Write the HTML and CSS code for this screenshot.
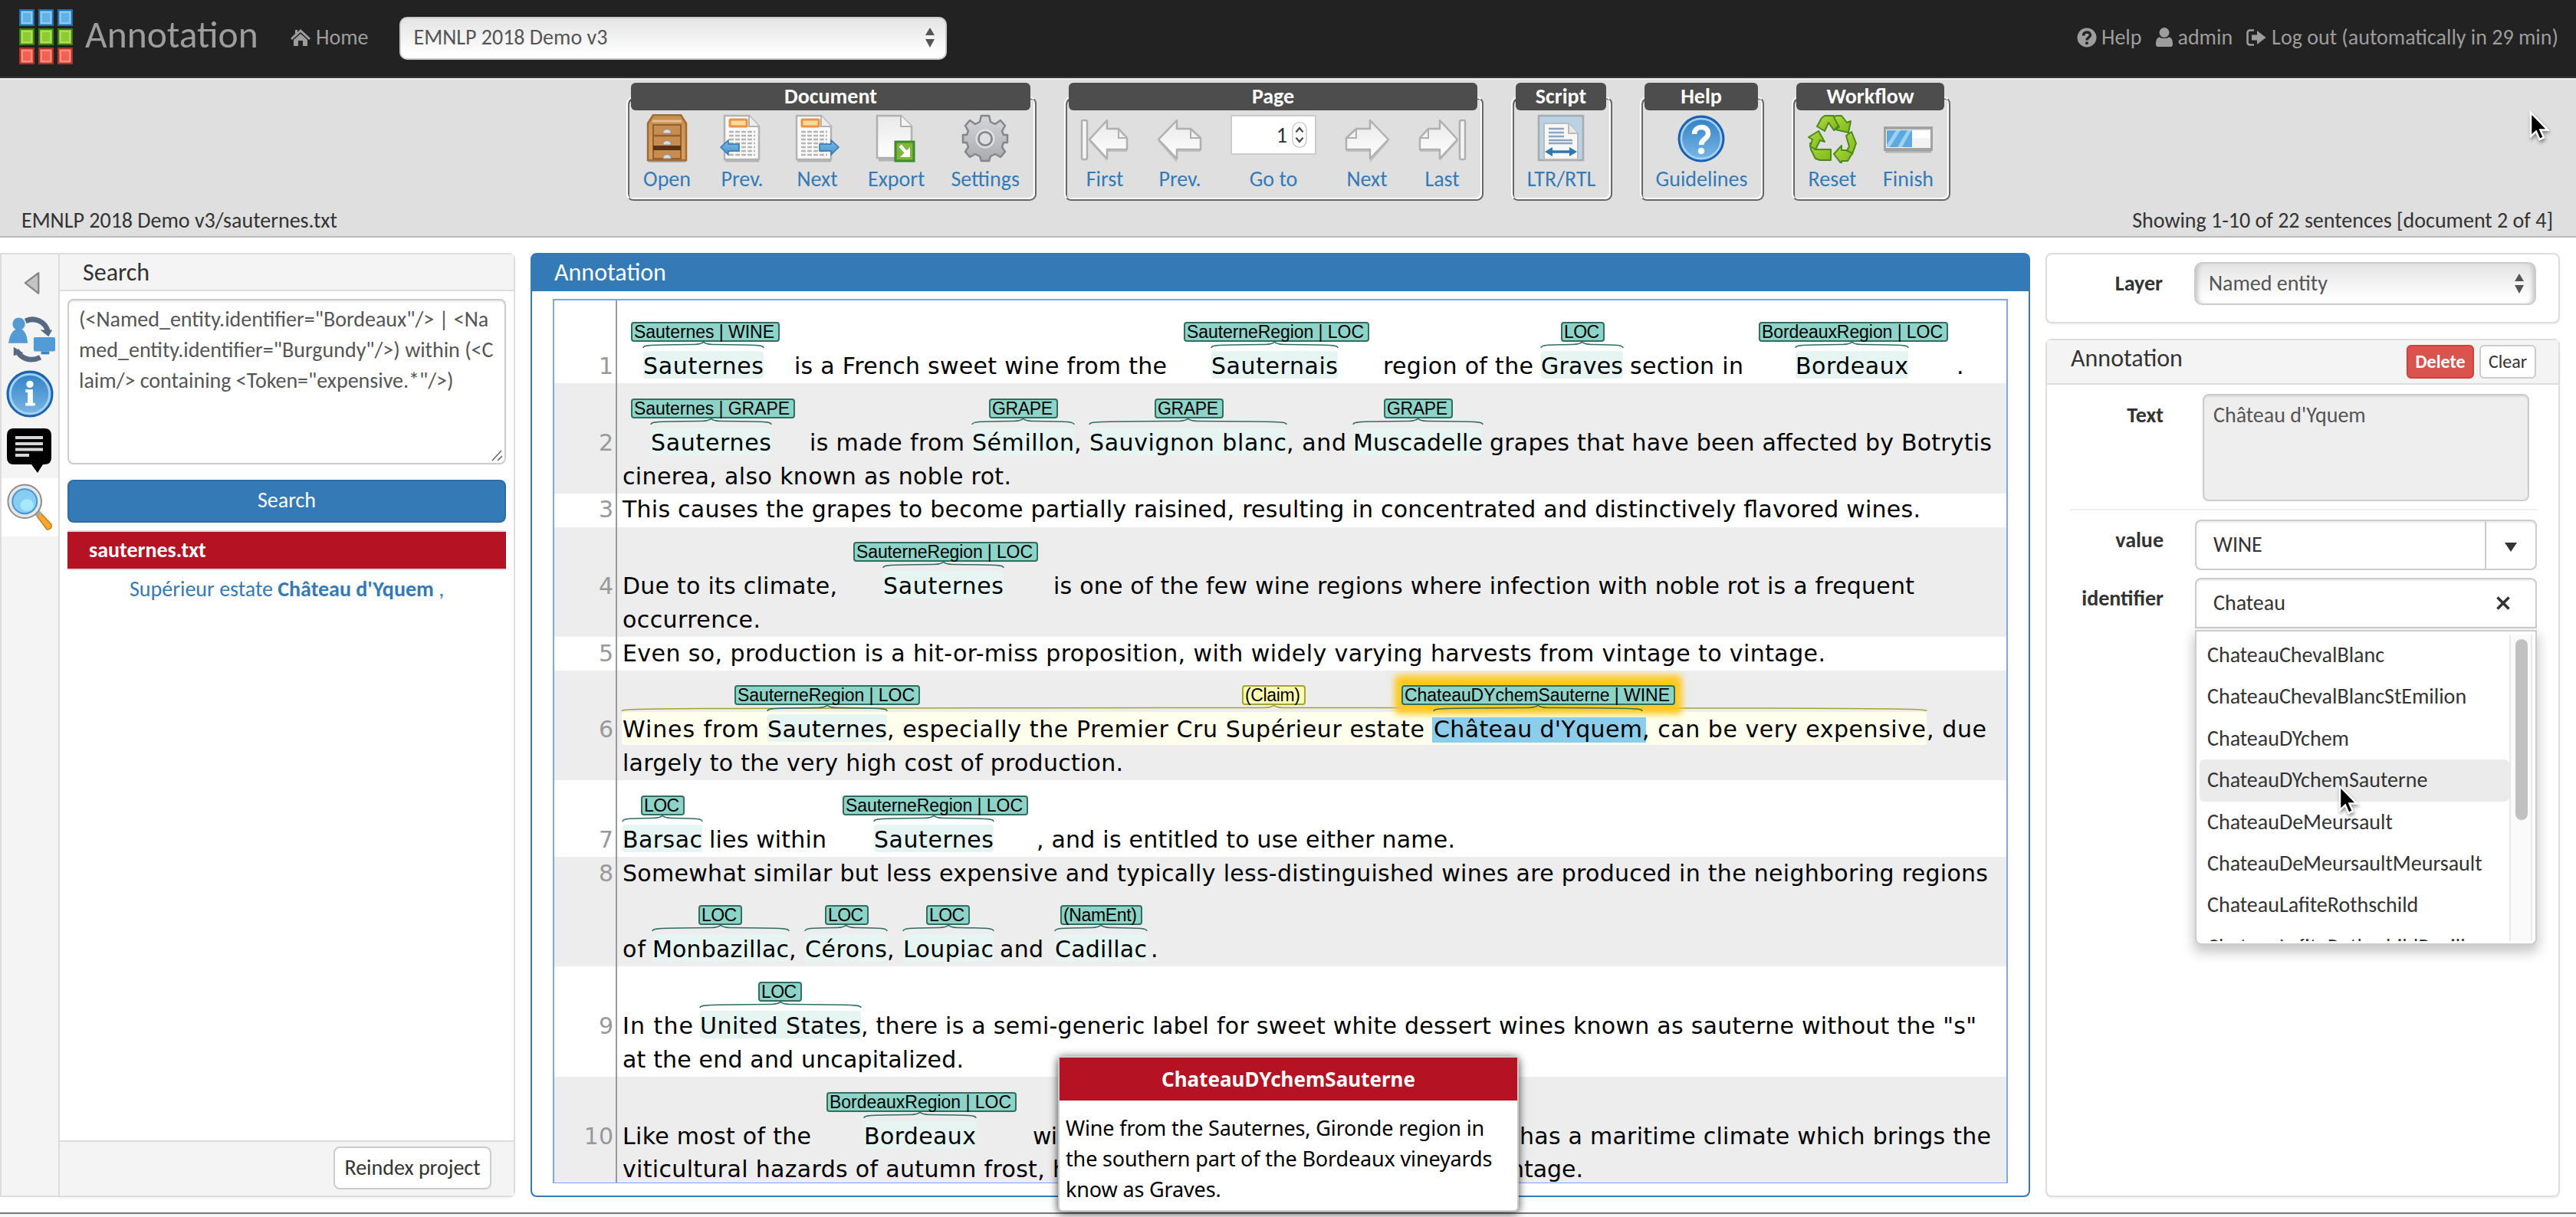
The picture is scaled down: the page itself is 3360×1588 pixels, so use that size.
FILE: index.html
```html
<!DOCTYPE html>
<html lang="en">
<head>
<meta charset="utf-8">
<title>Annotation</title>
<link rel="stylesheet" href="styles.css">
</head>
<body>
<svg class="defs" width="0" height="0" aria-hidden="true">
  <defs>
    <linearGradient id="gBlue" x1="0" y1="0" x2="0" y2="1"><stop offset="0" stop-color="#2f7fc4"/><stop offset="1" stop-color="#7db9e8"/></linearGradient>
    <linearGradient id="gArrow" x1="0" y1="0" x2="0" y2="1"><stop offset="0" stop-color="#7db8e2"/><stop offset="1" stop-color="#4a97cf"/></linearGradient>
    <linearGradient id="gPaper" x1="0" y1="0" x2="0" y2="1"><stop offset="0" stop-color="#e9e9e9"/><stop offset="1" stop-color="#ffffff"/></linearGradient>
    <linearGradient id="gWood" x1="0" y1="0" x2="0" y2="1"><stop offset="0" stop-color="#c58f55"/><stop offset="1" stop-color="#d99e60"/></linearGradient>
    <linearGradient id="gGear" x1="0" y1="0" x2="0" y2="1"><stop offset="0" stop-color="#d6d7da"/><stop offset="1" stop-color="#a9aaad"/></linearGradient>
    <linearGradient id="gGreen" x1="0" y1="0" x2="1" y2="1"><stop offset="0" stop-color="#b0d943"/><stop offset="1" stop-color="#7fb814"/></linearGradient>
    <symbol id="cursor" viewBox="0 0 26 40">
      <path d="M2 2V33L9 26.500L13.500 37L19 34.500L14.500 24.500H24Z" fill="#000" stroke="#fff" stroke-width="2.500"/>
    </symbol>
    <symbol id="page" viewBox="0 0 64 64">
      <path d="M10 60H54" stroke="#999" stroke-width="5" opacity=".6"/>
      <path d="M9 2H41L54 16V59H9Z" fill="#fafafa" stroke="#b3b3b3" stroke-width="2.500"/>
      <path d="M41 2V16H54" fill="#eee" stroke="#b3b3b3" stroke-width="2"/>
      <rect x="16" y="7" width="22" height="9" rx="1" fill="#f9dba0" stroke="#ee9440" stroke-width="3"/>
      <path d="M15 23H49M15 28H49M15 33H49M15 38H49M15 43H49M15 48H49M15 53H49" stroke="#b5b5b5" stroke-width="2.500" stroke-dasharray="6 2"/>
    </symbol>
    <symbol id="arrow" viewBox="0 0 64 64">
      <path d="M4 33L28 6V18H46L59 30V46H28V60Z" fill="#888" opacity=".35" transform="translate(0 3)"/>
      <path d="M4 33L28 8V19H46L59 31V46H28V58Z" fill="url(#gPaper)" stroke="#b0b0b0" stroke-width="2.500" stroke-linejoin="round"/>
      <path d="M46 19V31H59" fill="none" stroke="#b0b0b0" stroke-width="2"/>
    </symbol>
    <symbol id="arrowEnd" viewBox="0 0 64 64">
      <path d="M12 33L35 8V19H50L61 31V46H35V58Z" fill="#888" opacity=".35" transform="translate(0 3)"/>
      <rect x="2" y="8" width="7" height="51" rx="2" fill="#f6f6f6" stroke="#b0b0b0" stroke-width="2.500"/>
      <path d="M12 33L35 8V19H50L61 31V46H35V58Z" fill="url(#gPaper)" stroke="#b0b0b0" stroke-width="2.500" stroke-linejoin="round"/>
      <path d="M50 19V31H61" fill="none" stroke="#b0b0b0" stroke-width="2"/>
    </symbol>
    <symbol id="updown" viewBox="0 0 14 26"><path d="M7 0L13 10H1ZM7 26L1 15H13Z" fill="#555"/></symbol>
  </defs>
</svg>

<header class="navbar">
  <svg class="logo" viewBox="0 0 72 74">
    <g stroke="#1c6fa8" stroke-width="2" fill="#5fb1e8"><rect x="1" y="1" width="18" height="20"/><rect x="26" y="1" width="18" height="20"/><rect x="51" y="1" width="18" height="20"/></g>
    <g stroke="#3d7d12" stroke-width="2" fill="#8ccc2c"><rect x="1" y="26" width="18" height="20"/><rect x="26" y="26" width="18" height="20"/><rect x="51" y="26" width="18" height="20"/></g>
    <g stroke="#a8332a" stroke-width="2" fill="#f4604f"><rect x="1" y="51" width="18" height="20"/><rect x="26" y="51" width="18" height="20"/><rect x="51" y="51" width="18" height="20"/></g>
    <g fill="none" stroke="#fff" stroke-opacity=".3" stroke-width="2"><path d="M4 4h12v14H4zM29 4h12v14H29zM54 4h12v14H54zM4 29h12v14H4zM29 29h12v14H29zM54 29h12v14H54zM4 54h12v14H4zM29 54h12v14H29zM54 54h12v14H54z"/></g>
  </svg>
  <span class="brand">Annotation</span>
  <a class="navlink home"><svg viewBox="0 0 26 22"><path d="M13 0L26 12L24 14L13 4L2 14L0 12L6 6V1H9V4ZM13 6L22 14V22H16V15H10V22H4V14Z" fill="#9d9d9d"/></svg>Home</a>
  <div class="project-select"><span>EMNLP 2018 Demo v3</span><svg><use href="#updown"/></svg></div>
  <nav class="navright">
    <a class="navlink"><svg viewBox="0 0 26 26"><circle cx="13" cy="13" r="12.500" fill="#9d9d9d"/><path d="M8.500 10.500C8.500 4.500 17.500 4.500 17.500 10C17.500 13 13 13 13 16.500M13 18.500V22" fill="none" stroke="#222" stroke-width="3.400"/></svg>Help</a>
    <a class="navlink admin"><svg viewBox="1 0 24 26"><ellipse cx="13" cy="6.500" rx="6.500" ry="6.500" fill="#9d9d9d"/><path d="M7 12.500C9 14.500 17 14.500 19 12.500C23 13 24 17 24 22Q24 25 21 25H5Q2 25 2 22C2 17 3 13 7 12.500Z" fill="#9d9d9d"/></svg>admin</a>
    <a class="navlink logout"><svg viewBox="0 0 26 22"><path d="M10 1.500H5Q1.500 1.500 1.500 5V17Q1.500 20.500 5 20.500H10" fill="none" stroke="#9d9d9d" stroke-width="2.600"/><path d="M7 7.500H14V2L25.500 11L14 20V14.500H7Z" fill="#9d9d9d"/></svg>Log out (automatically in 29 min)</a>
  </nav>
</header>

<section class="actionbar">
  <div class="groups">
    <div class="group g-document">
      <h2>Document</h2>
      <div class="buttons">
        <a class="tool"><svg viewBox="0 0 64 64"><rect x="7" y="58" width="50" height="5" rx="2" fill="#777" opacity=".5"/><path d="M7 12L14 1H50L57 12V60H7Z" fill="url(#gWood)" stroke="#a26b34" stroke-width="2.500"/><path d="M13 9H51" stroke="#e6bd8c" stroke-width="3"/><path d="M14 14H50V58H14Z" fill="#c78d50" stroke="#94602c" stroke-width="2"/><path d="M14 28H50" stroke="#94602c" stroke-width="2.500"/><path d="M14 44H50" stroke="#5a3210" stroke-width="6"/><path d="M27 22Q32 17 37 22V25H27ZM27 37Q32 32 37 37V40H27ZM27 55Q32 50 37 55V58H27Z" fill="#d9dde2" stroke="#8d8d8d"/></svg>Open</a>
        <a class="tool"><svg viewBox="0 0 64 64"><use href="#page" width="64" height="64"/><path d="M4 43L14 34V39H28V48H14V53Z" fill="url(#gArrow)" stroke="#2f77b5" stroke-width="1.500"/></svg>Prev.</a>
        <a class="tool"><svg viewBox="0 0 64 64"><use href="#page" width="64" height="64" x="-4"/><path d="M60 43L50 34V39H35V48H50V53Z" fill="url(#gArrow)" stroke="#2f77b5" stroke-width="1.500"/></svg>Next</a>
        <a class="tool"><svg viewBox="0 0 64 64"><path d="M9 59H50" stroke="#999" stroke-width="5" opacity=".6"/><path d="M7 2H38L52 16V57H7Z" fill="url(#gPaper)" stroke="#b0b0b0" stroke-width="2.500"/><path d="M38 2V16H52" fill="#f4f4f4" stroke="#b0b0b0" stroke-width="2"/><rect x="31" y="36" width="24" height="25" fill="#7db63a" stroke="#3f8a2b" stroke-width="3"/><path d="M37 41L46 51" fill="none" stroke="#fff" stroke-width="4.500"/><path d="M50 43V56H37Z" fill="#fff"/></svg>Export</a>
        <a class="tool"><svg viewBox="0 0 64 64"><path d="M27 2H37L39 10L45 13L52 8L58 15L54 22L56 27H61V37H56L54 43L58 49L52 56L45 52L39 55L37 61H27L25 55L19 52L12 56L6 49L10 43L8 37H3V27H8L10 22L6 15L12 8L19 13L25 10Z" fill="url(#gGear)" stroke="#85868a" stroke-width="2.500" stroke-linejoin="round"/><circle cx="32" cy="32" r="8.500" fill="#dedede" stroke="#85868a" stroke-width="2.500"/><circle cx="32" cy="32" r="11.500" fill="none" stroke="#e4e4e6" stroke-width="2"/></svg>Settings</a>
      </div>
    </div>
    <div class="group g-page">
      <h2>Page</h2>
      <div class="buttons">
        <a class="tool"><svg viewBox="0 0 64 64"><use href="#arrowEnd" width="64" height="64"/></svg>First</a>
        <a class="tool"><svg viewBox="0 0 64 64"><use href="#arrow" width="64" height="64"/></svg>Prev.</a>
        <div class="tool goto"><div class="pageno"><span>1</span><svg viewBox="0 0 22 38"><rect x="1" y="1" width="20" height="36" rx="10" fill="#fff" stroke="#c8c8c8" stroke-width="1.500"/><path d="M6 15L11 9L16 15M6 23L11 29L16 23" fill="none" stroke="#444" stroke-width="2.500"/></svg></div>Go to</div>
        <a class="tool"><svg viewBox="0 0 64 64"><use href="#arrow" width="64" height="64" transform="matrix(-1 0 0 1 64 0)"/></svg>Next</a>
        <a class="tool"><svg viewBox="0 0 64 64"><use href="#arrowEnd" width="64" height="64" transform="matrix(-1 0 0 1 64 0)"/></svg>Last</a>
      </div>
    </div>
    <div class="group g-script">
      <h2>Script</h2>
      <div class="buttons">
        <a class="tool"><svg viewBox="0 0 64 64"><rect x="3" y="2" width="58" height="58" fill="#b9d2e4" stroke="#a7abb0" stroke-width="2.500"/><path d="M10 59V12H42L54 25V59Z" fill="#f7f7f7" stroke="#bbb" stroke-width="2"/><path d="M42 12V25H54" fill="#e7e7e7" stroke="#bbb" stroke-width="2"/><path d="M16 19H36M16 24H36M16 29H36M16 34H47M16 38H47" stroke="#8aa4c4" stroke-width="2.500"/><path d="M15 49H49" stroke="#2f77b5" stroke-width="3.500"/><path d="M11 49L21 43V55ZM53 49L43 43V55Z" fill="#2f77b5"/></svg>LTR/RTL</a>
      </div>
    </div>
    <div class="group g-help">
      <h2>Help</h2>
      <div class="buttons">
        <a class="tool"><svg viewBox="0 0 64 64"><circle cx="32" cy="32" r="29" fill="url(#gBlue)" stroke="#1d62b0" stroke-width="3"/><circle cx="32" cy="32" r="26" fill="none" stroke="#a5d1f2" stroke-width="2.500"/><path d="M23 26C23 14 42 14 41 26C40 33 32 32 32 40" fill="none" stroke="#fff" stroke-width="6.500"/><circle cx="32" cy="48" r="4.300" fill="#fff"/></svg>Guidelines</a>
      </div>
    </div>
    <div class="group g-workflow">
      <h2>Workflow</h2>
      <div class="buttons">
        <a class="tool"><svg viewBox="0 0 64 64"><g fill="url(#gGreen)" stroke="#4c8a1c" stroke-width="2" stroke-linejoin="round"><path d="M22 2H34L40 15L34 21L27 11L22 22L12 16L18 5Z"/><path d="M37 2H44L51 11L56 9L53 24L36 20L41 17L34 4Z"/><path d="M50 28L57 23L63 38L58 52L50 55H47L54 42Z"/><path d="M58 51L52 61H44V65L34 52L44 41V47H50Z"/><path d="M9 46H30V60H16L10 58L4 46L3 38L7 40Z"/><path d="M1 30L14 22L22 36L16 34L10 46L3 42L6 33Z"/></g></svg>Reset</a>
        <a class="tool"><svg viewBox="0 0 64 64"><rect x="1" y="18" width="62" height="28" fill="#f2f2f2" stroke="#a3a3a3" stroke-width="4"/><rect x="4" y="21" width="33" height="22" fill="#5ba9df"/><path d="M4 40L16 21H22L8 43H4ZM18 43L31 21H36L24 43Z" fill="#9dd0f3"/><path d="M37 22H60V31H37Z" fill="#fff"/><path d="M2 49H62" stroke="#888" stroke-opacity=".5" stroke-width="3"/></svg>Finish</a>
      </div>
    </div>
  </div>
  <div class="docinfo"><span>EMNLP 2018 Demo v3/sauternes.txt</span><span>Showing 1-10 of 22 sentences [document 2 of 4]</span></div>
</section>

<main class="workspace">
  <aside class="rail">
    <a class="rail-item collapse"><svg viewBox="0 0 24 34"><path d="M21 2V31L2 16Z" fill="#c4c4c6" stroke="#85858a" stroke-width="2.500" stroke-linejoin="round"/></svg></a>
    <a class="rail-item sync"><svg viewBox="0 0 64 64"><path d="M24 7C38 1 51 9 54 21M44 56C30 63 17 57 12 46" fill="none" stroke="#566882" stroke-width="7"/><path d="M44 19H60L55 28ZM8 42L21 50L8 54Z" fill="#566882"/><circle cx="15" cy="11" r="8.500" fill="#549bd6"/><path d="M1 37Q3 22 11 18H19Q26 22 27 37Z" fill="#549bd6"/><rect x="35" y="29" width="29" height="19" rx="2" fill="#549bd6"/><path d="M45 48H56V52H45Z" fill="#3f83bd"/></svg></a>
    <a class="rail-item info"><svg viewBox="0 0 64 64"><circle cx="32" cy="32" r="30" fill="url(#gBlue)" stroke="#1d62b0" stroke-width="3"/><circle cx="32" cy="32" r="26.500" fill="none" stroke="#a5d1f2" stroke-width="3"/><circle cx="32" cy="19" r="4.800" fill="#fff"/><path d="M26 26H36V44H39V48H26V44H29V30H26Z" fill="#fff"/></svg></a>
    <a class="rail-item comment"><svg viewBox="0 0 58 58"><path d="M9 0H49Q58 0 58 9V38Q58 47 49 47H47L40 58L32 47H9Q0 47 0 38V9Q0 0 9 0Z" fill="#000"/><path d="M11 12H47M11 20H47M11 27.500H47M11 35H29" stroke="#d6d6d6" stroke-width="4"/></svg></a>
    <a class="rail-item search active"><svg viewBox="0 0 62 64"><path d="M39 42L44 38L60 55Q61 62 54 62Z" fill="#f6a72c" stroke="#c07f1b" stroke-width="1.500"/><path d="M37 38L42 34L47 40L41 45Z" fill="#a9a9a9"/><circle cx="24" cy="24" r="19.500" fill="#89cdf4" stroke="#e8e8e8" stroke-width="6"/><circle cx="24" cy="24" r="22.500" fill="none" stroke="#8d8d8d" stroke-width="2"/><circle cx="24" cy="24" r="16.500" fill="none" stroke="#4597cf" stroke-width="2"/><ellipse cx="27" cy="29" rx="9" ry="8" fill="#a6e9fb"/></svg></a>
  </aside>
  <section class="panel searchpanel">
    <h3>Search</h3>
    <div class="searchbody">
      <div class="query">(&lt;Named_entity.identifier="Bordeaux"/&gt; | &lt;Na<br>med_entity.identifier="Burgundy"/&gt;) within (&lt;C<br>laim/&gt; containing &lt;Token="expensive.*"/&gt;)<svg class="grip" viewBox="0 0 16 16"><path d="M1 14L13 1M8 14L14 8" stroke="#666" stroke-width="1.600"/></svg></div>
      <button class="primary">Search</button>
      <div class="hitdoc">sauternes.txt</div>
      <a class="hit">Supérieur estate <b>Château d'Yquem</b> ,</a>
    </div>
    <footer><button class="plain">Reindex project</button></footer>
  </section>

  <section class="annotator">
    <h3>Annotation</h3>
    <div class="canvas" id="canvas"></div>
  </section>

  <aside class="details">
    <section class="panel layer">
      <label>Layer</label>
      <div class="layer-select"><span>Named entity</span><svg><use href="#updown"/></svg></div>
    </section>
    <section class="panel editor">
      <h3><span>Annotation</span><button class="danger">Delete</button><button class="plain">Clear</button></h3>
      <div class="field field-text"><label>Text</label><div class="textbox">Château d'Yquem</div></div>
      <div class="field field-value"><label>value</label><div class="combo"><span>WINE</span><i><svg viewBox="0 0 16 12"><path d="M0 0H16L8 12Z" fill="#333"/></svg></i></div></div>
      <div class="field field-id"><label>identifier</label>
        <div class="combo open"><span>Chateau</span><svg class="clear" viewBox="0 0 18 18"><path d="M1.500 1.500L16.500 16.500M16.500 1.500L1.500 16.500" stroke="#333" stroke-width="3.600"/></svg>
          <div class="dropdown">
            <ul>
              <li>ChateauChevalBlanc</li><li>ChateauChevalBlancStEmilion</li><li>ChateauDYchem</li><li class="hover">ChateauDYchemSauterne</li><li>ChateauDeMeursault</li><li>ChateauDeMeursaultMeursault</li><li>ChateauLafiteRothschild</li><li>ChateauLafiteRothschildPauillac</li>
            </ul>
            <div class="track"><div class="thumb"></div></div>
          </div>
        </div>
      </div>
    </section>
  </aside>
</main>
<div class="pagefoot"></div>

<div class="popover"><h4>ChateauDYchemSauterne</h4><p>Wine from the Sauternes, Gironde region in<br>the southern part of the Bordeaux vineyards<br>know as Graves.</p></div>
<svg class="cursor cursor-top"><use href="#cursor"/></svg>
<svg class="cursor cursor-list"><use href="#cursor"/></svg>
<script src="script.js"></script>
</body>
</html>
```
FILE: styles.css
```css
* { box-sizing: border-box; }
body { margin: 0; width: 3360px; height: 1588px; overflow: hidden; position: relative; display: flex; flex-direction: column; background: #fff; color: #333; font: 28px/40px Carlito, Calibri, Lato, sans-serif; }
h2, h3, h4, p, ul { margin: 0; padding: 0; font-weight: 400; }
ul { list-style: none; }
button { font: inherit; display: block; padding: 0; }
.defs { position: absolute; }

/* top navigation */
.navbar { flex: none; height: 104px; background: #222; border-bottom: 2px solid #eee; box-shadow: inset 0 -2px #333; display: flex; align-items: center; padding: 0 23px 5px 25px; color: #9d9d9d; }
.logo { width: 72px; height: 74px; margin-right: 14px; }
.brand { font-size: 49.500px; line-height: 60px; width: 227px; padding-bottom: 7px; white-space: nowrap; }
.navlink { display: flex; align-items: center; white-space: nowrap; }
.navlink svg { width: 26px; height: 26px; margin-right: 6px; }
.admin svg { width: 24px; margin-right: 5px; }
.home { margin-left: 41px; }
.home svg, .logout svg { height: 22px; margin-right: 7px; }
.project-select { width: 714px; height: 56px; margin: 2px 0 0 40px; }
.project-select, .layer-select { background: linear-gradient(#e4e4e4, #fff 90%); border: 2px solid #ccc; border-radius: 10px; display: flex; align-items: center; justify-content: space-between; padding: 0 13px 1px 17px; color: #555; }
.project-select svg, .layer-select svg { width: 14px; height: 26px; }
.navright { margin-left: auto; display: flex; gap: 18px; padding-top: 1px; }

/* action bar */
.actionbar { flex: none; height: 206px; background: #dfdfdf; border-bottom: 2px solid #bbb; display: flex; flex-direction: column; }
.groups { display: flex; gap: 36px; padding: 22px 0 0 817px; }
.group { height: 136px; border: 2px solid; border-color: #fff #666 #666 #fff; border-radius: 9px; box-shadow: inset 2px 2px #666, inset -2px -2px #fff; }
.group h2 { height: 36px; line-height: 35px; margin: -20px 6px 0 4px; border-radius: 6px; background: #4d4d4d; color: #fff; font-size: 28px; font-weight: 700; text-align: center; }
.g-document { width: 535px; }
.g-page { width: 547px; }
.g-script { width: 132px; }
.g-help { width: 162px; }
.g-workflow { width: 207px; }
.buttons { display: flex; justify-content: center; gap: 34px; padding: 5px 1px 0 0; }
.tool { display: flex; flex-direction: column; align-items: center; color: #337ab7; line-height: 41px; min-width: 64px; }
.tool > svg { width: 64px; height: 64px; }
.pageno { width: 112px; height: 52px; margin: 1px 0 11px; border: 2px solid #ccc; background: #fff; color: #333; display: flex; align-items: center; justify-content: flex-end; gap: 6px; padding-right: 10px; }
.pageno svg { width: 20px; height: 36px; }
.docinfo { display: flex; justify-content: space-between; padding: 6px 30px 0 28px; }

/* workspace */
.workspace { flex: none; height: 1252px; padding-top: 20px; display: flex; align-items: flex-start; }
.panel { background: #fff; border: 2px solid #ddd; border-radius: 8px; box-shadow: 0 2px 2px rgba(0,0,0,.05); }
.rail { width: 76px; height: 1232px; background: #f4f4f4; border: solid #ddd; border-width: 2px 0 2px 2px; display: flex; flex-direction: column; }
.rail-item { flex: none; height: 76px; display: flex; align-items: center; justify-content: center; }
.rail-item svg { width: 62px; height: 62px; }
.collapse { height: 72px; }
.collapse svg { width: 22px; height: 32px; margin: 4px 0 0 6px; }
.sync { height: 74px; padding: 4px 0 0 3px; }
.info { height: 72px; }
.comment { height: 74px; padding: 2px 2px 0 0; }
.comment svg { width: 58px; height: 58px; }
.active { background: #fff; }
.searchpanel { width: 596px; height: 1232px; border-radius: 0 8px 8px 0; display: flex; flex-direction: column; }
.panel h3, .annotator h3 { font-size: 32px; }
.searchpanel h3 { height: 48px; line-height: 48px; padding-left: 30px; background: #f4f4f4; border-bottom: 2px solid #ddd; }
.searchbody { flex: 1; padding: 10px; }
.query { position: relative; height: 216px; border: 2px solid #ccc; border-radius: 8px; box-shadow: inset 0 2px 2px rgba(0,0,0,.075); padding: 5px 12px 3px 13px; color: #555; white-space: nowrap; }
.grip { position: absolute; right: 1px; bottom: 1px; width: 16px; height: 16px; }
.primary { width: 100%; height: 56px; margin: 20px 0 10px; padding-bottom: 2px; background: #337ab7; color: #fff; border: 2px solid #2e6da4; border-radius: 8px; }
.hitdoc { height: 52px; line-height: 48px; padding-left: 28px; background: #b51324; border: solid #ddd; border-width: 2px 0; color: #fff; font-weight: 700; }
.hit { display: block; padding: 5px 0 0 81px; color: #337ab7; }
.searchpanel footer { height: 72px; background: #f4f4f4; border-top: 2px solid #ddd; display: flex; justify-content: flex-end; padding: 6px 29px 0; }
.plain { background: #fff; color: #333; border: 2px solid #ccc; border-radius: 8px; }
.searchpanel .plain { width: 206px; height: 56px; padding-bottom: 1px; }

/* annotation panel */
.annotator { width: 1956px; height: 1232px; margin-left: 20px; border: 2px solid #337ab7; border-radius: 8px; }
.annotator h3 { height: 48px; line-height: 47px; background: #337ab7; color: #fff; padding-left: 29px; border-radius: 4px 4px 0 0; }
.canvas { margin: 10px 27px 0; border: 2px solid #7fa2ff; border-bottom-width: 1px; background: linear-gradient(#999, #999) 80px 0 / 2px 100% no-repeat; }
.canvas svg { display: block; width: 1894px; }
.canvas text { font-family: "DejaVu Sans", Verdana, sans-serif; font-size: 30px; white-space: pre; }
.canvas .num { fill: #999; text-anchor: end; }
.canvas .tag { font-family: "Liberation Sans", Helvetica, Arial, sans-serif; font-size: 23px; }
.row-odd { fill: #fff; }
.row-even { fill: #ededed; }
.tagbox { fill: #8dd3c7; stroke: #2f6e60; stroke-width: 2; }
.tagbox.claim { fill: #ffffb3; stroke: #a5a52e; }
.hl { fill: #e6f5f2; }
.hl.claim { fill: #ffffed; }
.hl.picked { fill: #8bcdea; }
.brace { fill: none; stroke: #2f6e60; stroke-width: 1.500; }
.brace.claim { stroke: #a5a52e; }
.glow { fill: #ffc91e; filter: blur(4px); }

/* details */
.details { margin-left: 20px; width: 671px; display: flex; flex-direction: column; gap: 20px; }
.details label { font-weight: 700; text-align: right; width: 122px; margin-right: 41px; }
.layer { height: 92px; display: flex; align-items: flex-start; padding: 10px 28px 0 0; }
.layer label { width: 151px; line-height: 55px; }
.layer-select { width: 446px; height: 56px; box-shadow: inset 6px 0 6px -4px #bbb, inset -6px 0 6px -4px #bbb; }
.editor { height: 1120px; }
.editor h3 { height: 58px; background: #f4f4f4; border-bottom: 2px solid #ddd; padding: 6px 29px 0 31px; display: flex; gap: 7px; }
.editor h3 span { margin-right: auto; line-height: 36px; }
.editor h3 button { height: 44px; font-size: 24px; border-radius: 6px; padding-bottom: 1px; width: 74px; }
.editor h3 .danger { width: 88px; background: #d9534f; border: 2px solid #d43f3a; color: #fff; font-weight: 700; }
.field { display: flex; margin: 0 28px 0 30px; }
.field-text { padding: 12px 0 10px; border-bottom: 2px solid #eee; }
.field-text label { padding-top: 8px; }
.textbox { width: 426px; height: 140px; margin-left: 10px; background: #eee; border: 2px solid #ccc; border-radius: 8px; padding: 6px 12px; color: #555; box-shadow: inset 0 2px 2px rgba(0,0,0,.075); }
.field-value { padding-top: 12px; }
.field-id { padding-top: 10px; }
.field-value label, .field-id label { padding-top: 7px; }
.combo { position: relative; width: 446px; height: 66px; border: 2px solid #ccc; border-radius: 8px; display: flex; align-items: center; justify-content: space-between; padding-left: 22px; box-shadow: inset 0 2px 2px rgba(0,0,0,.075); }
.combo i { width: 66px; height: 62px; border-left: 2px solid #ccc; display: flex; align-items: center; justify-content: center; padding-top: 6px; }
.combo i svg { width: 16px; height: 12px; }
.combo .clear { width: 18px; height: 18px; margin-right: 33px; }
.combo.open { border-radius: 8px 8px 0 0; }
.dropdown { position: absolute; left: -2px; top: 66px; width: 446px; height: 411px; background: #fff; border: 2px solid #ccc; border-radius: 0 0 8px 8px; padding: 4px; display: flex; box-shadow: 0 8px 16px 2px rgba(0,0,0,.22); }
.dropdown ul { width: 404px; height: 400px; overflow: hidden; }
.dropdown li { height: 54.400px; line-height: 53px; padding-left: 10px; border-radius: 6px; }
.dropdown .hover { background: #ebebeb; }
.track { width: 30px; height: 400px; background: #fafafa; border: solid #e8e8e8; border-width: 0 2px; padding: 6px; }
.thumb { width: 16px; height: 236px; border-radius: 8px; background: #c1c1c1; }
.pagefoot { flex: none; margin-top: 0; height: 6px; background: #f7f7f7; border-top: 2px solid #777; }
.workspace { height: 1272px; }

/* floating layers */
.popover { position: absolute; left: 1380px; top: 1378px; width: 601px; height: 203px; background: #fff; border: 2px solid #ccc; border-radius: 6px; box-shadow: 0 2px 12px rgba(0,0,0,.75); color: #000; font: 27px/40px "Noto Sans", sans-serif; }
.popover h4 { height: 56px; line-height: 56px; font-size: 26px; font-weight: 700; text-align: center; background: #b51324; color: #fff; }
.popover p { padding: 16px 8px; white-space: nowrap; letter-spacing: -.15px; }
.cursor { position: absolute; width: 26px; height: 40px; filter: drop-shadow(1px 3px 2px rgba(0,0,0,.4)); }
.cursor-top { left: 3299px; top: 145px; }
.cursor-list { left: 3050px; top: 1024px; }
```
FILE: script.js
```javascript
// Each sentence: height, then its lines. A line has a baseline and segments
// [startX, endX, text, tagLabel, tagStartX, tagEndX].
const LEFT = 723;
const T = 812;
const sentences = [
  { h: 108, lines: [{ y: 96, segs: [
    [839, 996, 'Sauternes', 'Sauternes | WINE', 824, 1016],
    [1036, 1522, 'is a French sweet wine from the'],
    [1580, 1745, 'Sauternais', 'SauterneRegion | LOC', 1545, 1785],
    [1804, 2000, 'region of the'],
    [2010, 2117, 'Graves', 'LOC', 2037, 2092],
    [2126, 2274, 'section in'],
    [2342, 2489, 'Bordeaux', 'BordeauxRegion | LOC', 2295, 2540],
    [2552, 2562, '.']] }] },
  { h: 144, lines: [{ y: 88, segs: [
    [849, 1006, 'Sauternes', 'Sauternes | GRAPE', 824, 1036],
    [1056, 1258, 'is made from'],
    [1268, 1401, 'Sémillon', 'GRAPE', 1291, 1379],
    [1401, 1412, ','],
    [1421, 1678, 'Sauvignon blanc', 'GRAPE', 1507, 1595],
    [1678, 1756, ', and'],
    [1765, 1934, 'Muscadelle', 'GRAPE', 1806, 1894],
    [1943, 2598, 'grapes that have been affected by Botrytis']] },
    { y: 132, segs: [[T, 1319, 'cinerea, also known as noble rot.']] }] },
  { h: 44, lines: [{ y: 31, segs: [[T, 2505, 'This causes the grapes to become partially raisined, resulting in concentrated and distinctively flavored wines.']] }] },
  { h: 143, lines: [{ y: 87, segs: [
    [T, 1092, 'Due to its climate,'],
    [1152, 1309, 'Sauternes', 'SauterneRegion | LOC', 1114, 1353],
    [1374, 2497, 'is one of the few wine regions where infection with noble rot is a frequent']] },
    { y: 131, segs: [[T, 992, 'occurrence.']] }] },
  { h: 44, lines: [{ y: 32, segs: [[T, 2381, 'Even so, production is a hit-or-miss proposition, with widely varying harvests from vintage to vintage.']] }] },
  { h: 143, claim: [811, 2513, 1621, 1702, '(Claim)'], lines: [{ y: 87, segs: [
    [T, 990, 'Wines from'],
    [1001, 1157, 'Sauternes', 'SauterneRegion | LOC', 959, 1199],
    [1157, 1858, ', especially the Premier Cru Supérieur estate'],
    [1870, 2142, "Château d'Yquem", 'ChateauDYchemSauterne | WINE', 1829, 2184, 'picked'],
    [2142, 2512, ', can be very expensive'],
    [2513, 2591, ', due']] },
    { y: 131, segs: [[T, 1465, 'largely to the very high cost of production.']] }] },
  { h: 100, lines: [{ y: 88, segs: [
    [812, 916, 'Barsac', 'LOC', 837, 892],
    [925, 1078, 'lies within'],
    [1140, 1296, 'Sauternes', 'SauterneRegion | LOC', 1100, 1340],
    [1352, 1898, ', and is entitled to use either name.']] }] },
  { h: 143, lines: [{ y: 32, segs: [[T, 2593, 'Somewhat similar but less expensive and typically less-distinguished wines are produced in the neighboring regions']] },
    { y: 131, segs: [
    [T, 842, 'of'],
    [851, 1029, 'Monbazillac', 'LOC', 912, 967],
    [1029, 1040, ','],
    [1050, 1157, 'Cérons', 'LOC', 1077, 1132],
    [1157, 1168, ','],
    [1178, 1296, 'Loupiac', 'LOC', 1209, 1264],
    [1304, 1361, 'and'],
    [1376, 1496, 'Cadillac', '(NamEnt)', 1384, 1489],
    [1501, 1511, '.']] }] },
  { h: 144, lines: [{ y: 88, segs: [
    [T, 904, 'In the'],
    [913, 1123, 'United States', 'LOC', 990, 1045],
    [1123, 2578, ', there is a semi-generic label for sweet white dessert wines known as sauterne without the "s"']] },
    { y: 132, segs: [[T, 1257, 'at the end and uncapitalized.']] }] },
  { h: 138, lines: [{ y: 88, segs: [
    [T, 1058, 'Like most of the'],
    [1127, 1273, 'Bordeaux', 'BordeauxRegion | LOC', 1079, 1325],
    [1347, 1415, 'wine'],
    [1982, 2597, 'has a maritime climate which brings the']] },
    { y: 131, segs: [[T, 1428, 'viticultural hazards of autumn frost, hail'], [1943, 2065, 'vintage.']] }] },
];

const NS = 'http://www.w3.org/2000/svg';
function add(parent, name, attrs, text) {
  const el = document.createElementNS(NS, name);
  for (const key in attrs) el.setAttribute(key, attrs[key]);
  if (text !== undefined) el.textContent = text;
  parent.appendChild(el);
  return el;
}
function brace(svg, x0, x1, c, y, cls) {
  add(svg, 'path', { class: 'brace ' + cls, d:
    `M${x0} ${y - 34}C${x0} ${y - 38} ${x0 + 6} ${y - 38} ${c - 12} ${y - 38.5}` +
    `Q${c - 2} ${y - 39} ${c} ${y - 42}Q${c + 2} ${y - 39} ${c + 12} ${y - 38.5}` +
    `C${x1 - 6} ${y - 38} ${x1} ${y - 38} ${x1} ${y - 34}` });
}
function tag(svg, x0, x1, y, label, cls) {
  add(svg, 'rect', { class: 'tagbox ' + cls, x: x0, y: y - 67, width: x1 - x0, height: 24, rx: 3 });
  add(svg, 'text', { class: 'tag', x: x0 + 3, y: y - 47, textLength: x1 - x0 - 9 }, label);
}

sentences.forEach((s, i) => {
  const svg = add(document.getElementById('canvas'), 'svg', { viewBox: `${LEFT} 0 1894 ${s.h}`, height: s.h });
  const fill = i % 2 ? 'row-even' : 'row-odd';
  add(svg, 'rect', { class: fill, x: LEFT, y: 0, width: 80, height: s.h });
  add(svg, 'rect', { class: fill, x: LEFT + 82, y: 0, width: 1812, height: s.h });
  add(svg, 'text', { class: 'num', x: 800, y: s.lines[0].y }, i + 1);
  if (s.claim) {
    const [a, b, c, d, label] = s.claim;
    const y = s.lines[0].y;
    add(svg, 'rect', { class: 'hl claim', x: a, y: y - 33, width: b - a, height: 43, rx: 4 });
    brace(svg, a, b, (c + d) / 2, y, 'claim');
    tag(svg, c, d, y, label, 'claim');
  }
  for (const { y, segs } of s.lines) {
    for (const [x0, x1, text, label, t0, t1, state] of segs) {
      if (label) {
        if (state) {
          add(svg, 'rect', { class: 'glow', x: t0 - 10, y: y - 81, width: t1 - t0 + 20, height: 51, rx: 6 });
          add(svg, 'rect', { class: 'hl picked', x: x0 - 2, y: y - 26, width: x1 - x0 + 7, height: 33 });
        } else {
          add(svg, 'rect', { class: 'hl', x: x0, y: y - 30, width: x1 - x0, height: 36, rx: 4 });
        }
        brace(svg, x0, x1, (x0 + x1) / 2, y, '');
        tag(svg, t0, t1, y, label, '');
      }
      add(svg, 'text', { x: x0, y, textLength: x1 - x0 }, text);
    }
  }
});
```
